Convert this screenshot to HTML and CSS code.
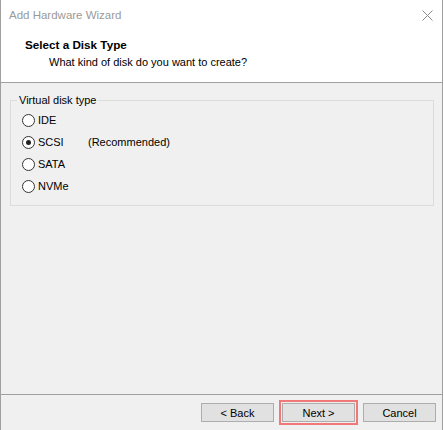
FILE: index.html
```html
<!DOCTYPE html>
<html>
<head>
<meta charset="utf-8">
<link rel="stylesheet" href="styles.css">
</head>
<body>
<div class="window">
  <div class="titlebar">
    <span class="title">Add Hardware Wizard</span>
    <svg class="close" width="11" height="11" viewBox="0 0 11 11"><path d="M0.5 0.5 L10.5 10.5 M10.5 0.5 L0.5 10.5" stroke="#8a8a8a" stroke-width="1"/></svg>
  </div>
  <div class="header">
    <div class="h-title">Select a Disk Type</div>
    <div class="h-sub">What kind of disk do you want to create?</div>
  </div>
  <div class="content">
    <fieldset class="group">
      <legend class="legend">Virtual disk type</legend>
      <div class="row"><span class="radio"></span><span class="lbl">IDE</span></div>
      <div class="row"><span class="radio checked"></span><span class="lbl">SCSI</span><span class="note">(Recommended)</span></div>
      <div class="row"><span class="radio"></span><span class="lbl">SATA</span></div>
      <div class="row"><span class="radio"></span><span class="lbl">NVMe</span></div>
    </fieldset>
  </div>
  <div class="footer">
    <button class="btn">&lt; Back</button>
    <button class="btn focus">Next &gt;</button>
    <button class="btn">Cancel</button>
  </div>
</div>
</body>
</html>
```
FILE: styles.css
```css
html, body {
  margin: 0;
  padding: 0;
  background: #ffffff;
}
body {
  width: 444px;
  height: 430px;
  overflow: hidden;
  font-family: "Liberation Sans", Arial, sans-serif;
  font-size: 11px;
  color: #000;
}
.window {
  width: 441px;
  height: 430px;
  border-left: 1px solid #a0a0a0;
  border-right: 1px solid #a0a0a0;
  display: flex;
  flex-direction: column;
  background: #f0f0f0;
}
.titlebar {
  height: 30px;
  background: #fff;
  display: flex;
  align-items: center;
  justify-content: space-between;
  padding: 0 9px 0 8px;
}
.title {
  color: #9a9a9a;
  font-size: 11.5px;
  line-height: 16px;
}
.close {
  display: block;
}
.header {
  background: #fff;
  height: 53px;
  box-sizing: border-box;
  padding: 7px 0 0 24px;
  border-bottom: 1px solid #a0a0a0;
}
.h-title {
  font-weight: bold;
  font-size: 11.7px;
  line-height: 16px;
}
.h-sub {
  line-height: 16px;
  margin-left: 24px;
  margin-top: 1px;
}
.content {
  flex: 1;
  padding: 9px 0 0 9px;
}
.group {
  margin: 0;
  box-sizing: border-box;
  width: 424px;
  border: 1px solid #dcdcdc;
  padding: 1px 0 8px 0;
}
.legend {
  margin-left: 6px;
  padding: 0 2px;
  line-height: 16px;
}
.row {
  height: 22px;
  display: flex;
  align-items: center;
  padding-left: 11px;
}
.radio {
  width: 11px;
  height: 11px;
  border: 1px solid #333;
  border-radius: 50%;
  background: #fff;
  display: flex;
  align-items: center;
  justify-content: center;
  margin-right: 3px;
}
.radio.checked::after {
  content: "";
  width: 5px;
  height: 5px;
  border-radius: 50%;
  background: #222;
}
.lbl {
  width: 50px;
}
.footer {
  border-top: 1px solid #a0a0a0;
  display: flex;
  justify-content: flex-end;
  align-items: flex-start;
  gap: 8px;
  padding: 8px 6px 0 0;
  box-sizing: border-box;
  height: 36px;
}
.btn {
  width: 73px;
  height: 19px;
  margin: 0;
  padding: 0;
  border: 1px solid #adadad;
  background: #e1e1e1;
  font-family: "Liberation Sans", Arial, sans-serif;
  font-size: 11px;
  color: #000;
  line-height: 16px;
}
.btn.focus {
  outline: 2px solid #f07878;
  outline-offset: 1px;
}
```
